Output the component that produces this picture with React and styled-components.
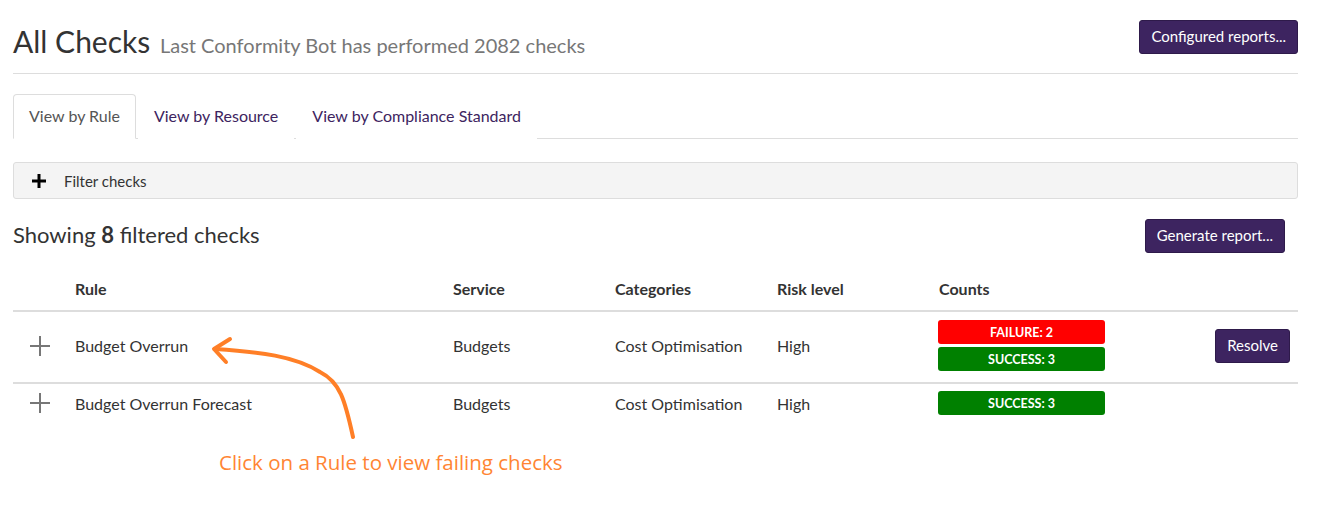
import React from "react";
import styled, { createGlobalStyle } from "styled-components";

const GlobalStyle = createGlobalStyle`
  body {
    margin: 0;
    background: #fff;
    font-family: Lato, "Open Sans", sans-serif;
    color: #333;
  }
`;

const PURPLE = "#3d2460";

const rules = [
  { name: "Budget Overrun", service: "Budgets", category: "Cost Optimisation", risk: "High", failure: 2, success: 3 },
  { name: "Budget Overrun Forecast", service: "Budgets", category: "Cost Optimisation", risk: "High", failure: 0, success: 3 },
];

export default function App() {
  return (
    <Page>
      <GlobalStyle />
      <Header>
        <Title>
          All Checks <Subtitle>Last Conformity Bot has performed 2082 checks</Subtitle>
        </Title>
        <PurpleButton>Configured reports...</PurpleButton>
      </Header>
      <Divider />

      <Tabs>
        <Tab active>View by Rule</Tab>
        <Tab>View by Resource</Tab>
        <Tab>View by Compliance Standard</Tab>
      </Tabs>

      <FilterBar>
        <BoldPlus viewBox="0 0 16 16">
          <path d="M8 1v14M1 8h14" stroke="#000" strokeWidth="3" />
        </BoldPlus>
        Filter checks
      </FilterBar>

      <SummaryRow>
        <Summary>
          Showing <b>8</b> filtered checks
        </Summary>
        <PurpleButton>Generate report...</PurpleButton>
      </SummaryRow>

      <Table>
        <HeadRow>
          <span />
          <span>Rule</span>
          <span>Service</span>
          <span>Categories</span>
          <span>Risk level</span>
          <span>Counts</span>
          <span />
        </HeadRow>
        {rules.map((r) => (
          <BodyRow key={r.name} tall={r.failure > 0}>
            <ThinPlus viewBox="0 0 20 20">
              <path d="M10 0v20M0 10h20" stroke="#777" strokeWidth="2" />
            </ThinPlus>
            <span>{r.name}</span>
            <span>{r.service}</span>
            <span>{r.category}</span>
            <span>{r.risk}</span>
            <Counts>
              {r.failure > 0 && <Badge color="#ff0000">FAILURE: {r.failure}</Badge>}
              <Badge color="#008000">SUCCESS: {r.success}</Badge>
            </Counts>
            <ActionCell>
              {r.failure > 0 && <ResolveButton>Resolve</ResolveButton>}
            </ActionCell>
          </BodyRow>
        ))}
      </Table>

      <Annotation>
        <svg width="1325" height="511" viewBox="0 0 1325 511">
          <path
            d="M353 437 C 345 400, 340 382, 320 372 C 295 356, 260 352, 215 349"
            fill="none"
            stroke="#ff7f27"
            strokeWidth="4"
            strokeLinecap="round"
          />
          <path
            d="M230 339 L 214 349 L 226 362"
            fill="none"
            stroke="#ff7f27"
            strokeWidth="4"
            strokeLinecap="round"
            strokeLinejoin="round"
          />
        </svg>
        <AnnotationText>Click on a Rule to view failing checks</AnnotationText>
      </Annotation>
    </Page>
  );
}

const Page = styled.div`
  position: relative;
  width: 1325px;
  height: 511px;
  box-sizing: border-box;
  padding: 20px 27px 0 13px;
  overflow: hidden;
`;

const Header = styled.div`
  display: flex;
  justify-content: space-between;
  align-items: center;
  height: 34px;
`;

const Title = styled.h1`
  margin: 0;
  font-size: 30px;
  font-weight: 400;
  color: #333;
  line-height: 34px;
  position: relative;
  top: 6px;
`;

const Subtitle = styled.small`
  font-size: 20px;
  color: #777;
  margin-left: 2px;
`;

const PurpleButton = styled.button`
  background: ${PURPLE};
  color: #fff;
  border: 1px solid #2e1a4a;
  border-radius: 3px;
  font-family: Lato, sans-serif;
  font-size: 15px;
  height: 34px;
  padding: 0 11px 2px;
  cursor: pointer;
`;

const Divider = styled.hr`
  margin: 19px 0 20px;
  border: 0;
  border-top: 1px solid #ddd;
`;

const Tabs = styled.div`
  display: flex;
  border-bottom: 1px solid #ddd;
  height: 44px;
`;

const Tab = styled.div`
  padding: 0 15px 2px;
  margin-right: 2px;
  margin-bottom: -1px;
  display: flex;
  align-items: center;
  font-size: 16px;
  border: 1px solid ${(p) => (p.active ? "#ddd" : "transparent")};
  border-bottom-color: ${(p) => (p.active ? "#fff" : "transparent")};
  border-radius: 4px 4px 0 0;
  background: #fff;
  color: ${(p) => (p.active ? "#555" : PURPLE)};
  cursor: pointer;
`;

const FilterBar = styled.div`
  margin-top: 23px;
  height: 35px;
  display: flex;
  align-items: center;
  gap: 17px;
  padding-left: 17px;
  background: #f4f4f4;
  border: 1px solid #ddd;
  border-radius: 3px;
  font-size: 15px;
  color: #333;
`;

const BoldPlus = styled.svg`
  width: 16px;
  height: 16px;
`;

const SummaryRow = styled.div`
  margin-top: 20px;
  display: flex;
  justify-content: space-between;
  align-items: center;
  padding-right: 13px;
`;

const Summary = styled.div`
  font-size: 22px;
  color: #333;
  padding-bottom: 3px;

  b {
    font-weight: 700;
  }
`;

const Table = styled.div`
  margin-top: 15px;
`;

const gridCols = "62px 378px 162px 162px 162px 1fr auto";

const HeadRow = styled.div`
  display: grid;
  grid-template-columns: ${gridCols};
  align-items: center;
  box-sizing: border-box;
  height: 44px;
  padding-bottom: 2px;
  border-bottom: 2px solid #ddd;
  font-size: 16px;
  font-weight: 700;
  color: #333;
`;

const BodyRow = styled.div`
  display: grid;
  grid-template-columns: ${gridCols};
  align-items: center;
  box-sizing: border-box;
  height: ${(p) => (p.tall ? "72px" : "40px")};
  padding-bottom: ${(p) => (p.tall ? "3px" : "2px")};
  border-bottom: ${(p) => (p.tall ? "2px solid #ddd" : "none")};
  font-size: 16px;
  color: #333;
`;

const ThinPlus = styled.svg`
  width: 20px;
  height: 20px;
  margin-left: 17px;
`;

const Counts = styled.div`
  display: flex;
  flex-direction: column;
  gap: 3px;
  margin-left: -1px;
`;

const Badge = styled.div`
  width: 167px;
  height: 24px;
  border-radius: 3px;
  background: ${(p) => p.color};
  color: #fff;
  font-size: 12.5px;
  font-weight: 700;
  display: flex;
  align-items: center;
  justify-content: center;
`;

const ActionCell = styled.div`
  padding-right: 8px;
`;

const ResolveButton = styled(PurpleButton)`
  font-size: 15px;
  padding: 0 11px 2px;
`;

const Annotation = styled.div`
  position: absolute;
  inset: 0;
  pointer-events: none;

  svg {
    position: absolute;
    left: 0;
    top: 0;
  }
`;

const AnnotationText = styled.div`
  position: absolute;
  left: 219px;
  top: 448px;
  font-family: "Open Sans", sans-serif;
  font-size: 20.5px;
  color: #ff8533;
`;
